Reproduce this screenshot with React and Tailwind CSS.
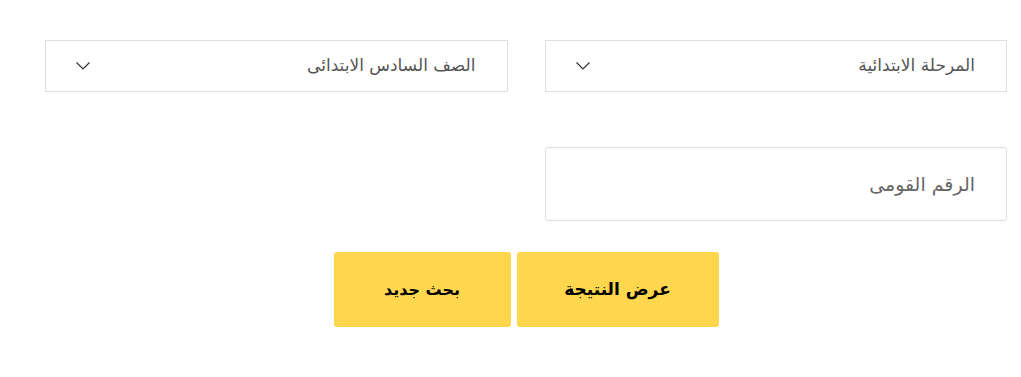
import React from "react";

function Chevron() {
  return (
    <svg width="14" height="8" viewBox="0 0 14 8" fill="none" className="shrink-0">
      <path d="M0.5 0.5L7 7L13.5 0.5" stroke="#333" strokeWidth="1.2" />
    </svg>
  );
}

function Select({ label }) {
  return (
    <div className="flex-1 h-[52px] border border-[#dedede] bg-white flex items-center justify-between pr-[31px] pl-[30px]">
      <span className="text-[17px] text-[#555]">{label}</span>
      <Chevron />
    </div>
  );
}

export default function App() {
  return (
    <div
      dir="rtl"
      className="w-[1021px] h-[377px] bg-white pt-[40px] pr-[14px] pl-[45px]"
      style={{ fontFamily: '"DejaVu Sans", "Noto Sans", sans-serif' }}
    >
      <div className="flex gap-[37px]">
        <Select label="المرحلة الابتدائية" />
        <Select label="الصف السادس الابتدائى" />
      </div>
      <div className="flex mt-[55px]">
        <div className="w-[462px] h-[74px] border border-[#dedede] rounded-[3px] flex items-center pr-[31px]">
          <span className="text-[19px] text-[#666]">الرقم القومى</span>
        </div>
      </div>
      <div className="flex justify-center gap-[6px] mt-[31px]">
        <button className="w-[202px] h-[75px] bg-[#fed74f] rounded-[3px] text-[17px] font-bold text-black">
          عرض النتيجة
        </button>
        <button className="w-[177px] h-[75px] bg-[#fed74f] rounded-[3px] text-[16px] font-bold text-black">
          بحث جديد
        </button>
      </div>
    </div>
  );
}
